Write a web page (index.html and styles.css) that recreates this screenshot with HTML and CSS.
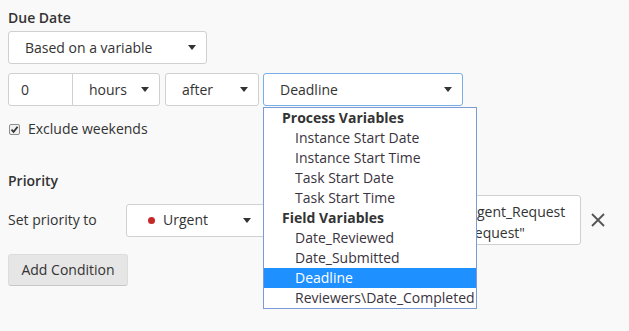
FILE: index.html
```html
<!DOCTYPE html>
<html>
<head>
<meta charset="utf-8">
<link rel="stylesheet" href="styles.css">
</head>
<body>
<div class="page">
  <div class="label">Due Date</div>
  <div class="select wide"><span class="val">Based on a variable</span><svg class="caret" width="8" height="5" viewBox="0 0 8 5"><polygon points="0,0 8,0 4,5"/></svg></div>

  <div class="row">
    <div class="group">
      <div class="input num">0</div>
      <div class="select unit"><span class="val">hours</span><svg class="caret" width="8" height="5" viewBox="0 0 8 5"><polygon points="0,0 8,0 4,5"/></svg></div>
    </div>
    <div class="select rel"><span class="val">after</span><svg class="caret" width="8" height="5" viewBox="0 0 8 5"><polygon points="0,0 8,0 4,5"/></svg></div>
    <div class="select var focus"><span class="val">Deadline</span><svg class="caret" width="8" height="5" viewBox="0 0 8 5"><polygon points="0,0 8,0 4,5"/></svg></div>
  </div>

  <div class="check">
    <span class="box"><svg width="9" height="9" viewBox="0 0 9 9"><path d="M1.5 4.6 L3.6 6.8 L7.6 1.8" fill="none" stroke="#333" stroke-width="1.8"/></svg></span>
    <span>Exclude weekends</span>
  </div>

  <div class="label priority">Priority</div>
  <div class="prow">
    <span class="plabel">Set priority to</span>
    <div class="select urgent"><span class="val"><span class="dot"></span>Urgent</span><svg class="caret" width="8" height="5" viewBox="0 0 8 5"><polygon points="0,0 8,0 4,5"/></svg></div>
    <div class="expr">
      <div class="line l1">Urgent_Request</div>
      <div class="line l2">"Urgent Request"</div>
    </div>
    <svg class="close" width="16" height="16" viewBox="0 0 16 16"><path d="M2 2 L14 14 M14 2 L2 14" stroke="#555" stroke-width="1.8" fill="none"/></svg>
  </div>

  <button class="btn">Add Condition</button>

  <ul class="dropdown">
    <li class="grp">Process Variables</li>
    <li class="opt">Instance Start Date</li>
    <li class="opt">Instance Start Time</li>
    <li class="opt">Task Start Date</li>
    <li class="opt">Task Start Time</li>
    <li class="grp">Field Variables</li>
    <li class="opt">Date_Reviewed</li>
    <li class="opt">Date_Submitted</li>
    <li class="opt sel">Deadline</li>
    <li class="opt">Reviewers\Date_Completed</li>
  </ul>
</div>
</body>
</html>
```

FILE: styles.css
```css
* { box-sizing: border-box; }
html, body { margin: 0; padding: 0; background: #f9f9f9; }
body {
  font-family: "Open Sans", "Liberation Sans", sans-serif;
  font-size: 14px;
  line-height: 20px;
  color: #333;
}
.page {
  position: relative;
  padding: 8px 8px 0 8px;
  width: 629px;
  height: 331px;
  overflow: hidden;
}
.label { font-weight: 600; height: 20px; }
.select, .input {
  height: 33px;
  background: #fff;
  border: 1px solid #d0d0d0;
  border-radius: 3px;
  display: flex;
  align-items: center;
}
.select { justify-content: space-between; padding: 0 10px 0 16px; }
.caret { fill: #333; flex: none; }
.wide { width: 199px; margin-top: 3px; }
.row { display: flex; margin-top: 9px; }
.group { display: flex; }
.num { width: 65px; padding-left: 12px; border-radius: 3px 0 0 3px; }
.unit { width: 88px; margin-left: -1px; border-radius: 0 3px 3px 0; }
.rel { width: 94px; margin-left: 5px; }
.var { width: 200px; margin-left: 4px; }
.focus { border-color: #78aee6; }
.check {
  display: flex;
  align-items: center;
  margin-top: 13px;
  height: 20px;
}
.box {
  width: 11px; height: 11px;
  margin-left: 1px;
  margin-right: 8px;
  border: 1px solid #8d8d8d;
  border-radius: 2px;
  background: #f1f1f1;
  display: flex; align-items: center; justify-content: center;
}
.priority { margin-top: 32px; }
.prow {
  display: flex;
  align-items: center;
  margin-top: 4px;
  height: 50px;
}
.plabel { width: 118px; }
.urgent { width: 140px; padding-left: 21px; padding-right: 14px; }
.dot {
  display: inline-block;
  width: 7px; height: 7px;
  border-radius: 50%;
  background: #c62828;
  margin-right: 8px;
  vertical-align: 1px;
}
.expr {
  margin-left: 10px;
  width: 305px;
  height: 50px;
  background: #fff;
  border: 1px solid #d0d0d0;
  border-radius: 3px;
  padding: 5px 0 0 0;
  overflow: hidden;
  line-height: 21px;
}
.line { white-space: nowrap; }
.l1 { padding-left: 184px; }
.l2 { padding-left: 135px; }
.close { margin-left: 9px; }
.btn {
  display: block;
  margin-top: 9px;
  height: 32px;
  width: 120px;
  font: inherit;
  color: #333;
  background: #e6e6e6;
  border: 1px solid #dcdcdc;
  border-bottom-color: #c8c8c8;
  border-radius: 3px;
  padding: 0;
}
.dropdown {
  position: absolute;
  left: 263px;
  top: 107px;
  width: 214px;
  margin: 0;
  padding: 0;
  list-style: none;
  background: #fff;
  border: 1px solid #7a9bd5;
}
.dropdown li { height: 20px; line-height: 20px; white-space: nowrap; }
.grp { font-weight: 700; padding-left: 18px; }
.opt { padding-left: 31px; color: #3a3340; }
.sel { background: #1e90ff; color: #fff; }
```
